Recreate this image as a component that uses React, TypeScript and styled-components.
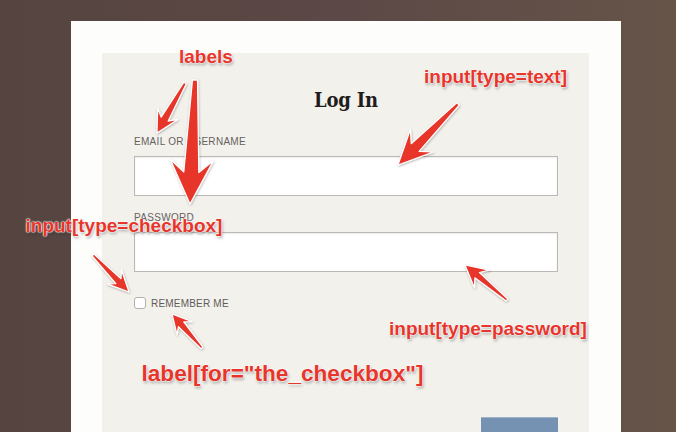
import React from "react";
import styled, { createGlobalStyle } from "styled-components";

const Global = createGlobalStyle`
  html, body { margin: 0; padding: 0; overflow: hidden; }
  body { font-family: "Liberation Sans", Arial, sans-serif; }
  * { box-sizing: border-box; }
`;

const Screen = styled.div`
  position: relative;
  width: 676px;
  height: 432px;
  overflow: hidden;
  background: linear-gradient(to right, #55443f 0%, #5c4846 50%, #665449 100%);
  padding: 21px 0 0 71px;
`;

const Card = styled.div`
  width: 550px;
  min-height: 411px;
  background: #fdfdfb;
  padding: 32px 32px 0 31px;
`;

const Panel = styled.div`
  background: #f3f1ec;
  padding: 34px 31px 40px 32px;
  display: flex;
  flex-direction: column;
`;

const Title = styled.h1`
  margin: 0 0 23px;
  font-family: "DejaVu Serif Condensed", "Liberation Serif", serif;
  font-weight: 700;
  font-size: 20px;
  line-height: 26px;
  letter-spacing: -0.2px;
  text-align: center;
  color: #1f1d1c;
`;

const Field = styled.div<{ $gapTop?: number }>`
  display: flex;
  flex-direction: column;
  gap: 8px;
  margin-top: ${(p) => p.$gapTop ?? 0}px;
`;

const Label = styled.label`
  font-size: 10px;
  line-height: 12px;
  letter-spacing: 0.3px;
  text-transform: uppercase;
  color: #65625e;
`;

const Input = styled.input`
  width: 424px;
  height: 40px;
  margin: 0;
  border: 1px solid #bcb9b4;
  background: #fff;
  box-shadow: inset 0 1px 2px rgba(0, 0, 0, 0.08);
  outline: none;
  padding: 0 10px;
  font-family: "Liberation Sans", Arial, sans-serif;
`;

const CheckRow = styled.div`
  display: flex;
  align-items: center;
  gap: 5px;
  margin-top: 25px;
  height: 12px;
`;

const Box = styled.span`
  display: inline-block;
  width: 12px;
  height: 12px;
  border: 1px solid #b3b0ab;
  border-radius: 3px;
  background: #fff;
`;

const CheckLabel = styled.label`
  font-size: 10px;
  line-height: 12px;
  letter-spacing: 0.2px;
  padding-top: 1px;
  color: #5f5c58;
  text-transform: uppercase;
`;

const ButtonRow = styled.div`
  display: flex;
  justify-content: flex-end;
  margin-top: 108px;
`;

const Button = styled.button`
  width: 77px;
  height: 60px;
  border: none;
  border-top: 1px solid #9db2c9;
  background: #7592b2;
  color: #fff;
  font-family: "Liberation Sans", Arial, sans-serif;
  font-size: 11px;
  letter-spacing: 0.5px;
  padding: 34px 0 0;
`;

const Note = styled.div<{ $size?: number }>`
  position: absolute;
  font-family: "Liberation Sans", Arial, sans-serif;
  font-weight: 700;
  font-size: ${(p) => p.$size ?? 19}px;
  line-height: 1;
  white-space: nowrap;
  color: #e8352b;
  text-shadow: 0 0 1px #fff, 0 0 2px #fff, 0 0 2px #fff, 1px 2px 3px rgba(0, 0, 0, 0.35);
`;

const Overlay = styled.svg`
  position: absolute;
  left: 0;
  top: 0;
  pointer-events: none;
`;

type Arrow = {
  t: [number, number];
  p: [number, number];
  L: number;
  W: number;
  w0: number;
  w1: number;
};

function arrowPoints({ t, p, L, W, w0, w1 }: Arrow): string {
  const [tx, ty] = t;
  const [px, py] = p;
  const dx = px - tx;
  const dy = py - ty;
  const len = Math.hypot(dx, dy);
  const ux = dx / len;
  const uy = dy / len;
  const nx = -uy;
  const ny = ux;
  const bx = px - ux * L;
  const by = py - uy * L;
  const kx = px - ux * L * 0.72;
  const ky = py - uy * L * 0.72;
  const pts: [number, number][] = [
    [tx + (nx * w0) / 2, ty + (ny * w0) / 2],
    [kx + (nx * w1) / 2, ky + (ny * w1) / 2],
    [bx + nx * W, by + ny * W],
    [px, py],
    [bx - nx * W, by - ny * W],
    [kx - (nx * w1) / 2, ky - (ny * w1) / 2],
    [tx - (nx * w0) / 2, ty - (ny * w0) / 2],
  ];
  return pts.map(([x, y]) => `${x.toFixed(1)},${y.toFixed(1)}`).join(" ");
}

const arrows: Arrow[] = [
  { t: [185, 83], p: [157, 133], L: 22, W: 11.5, w0: 3, w1: 8 },
  { t: [195, 80], p: [190, 204], L: 44, W: 21.5, w0: 5, w1: 15 },
  { t: [458, 104], p: [398, 165], L: 34, W: 16, w0: 3.5, w1: 11 },
  { t: [93, 255], p: [129, 292], L: 21, W: 10, w0: 2.5, w1: 7 },
  { t: [507, 300], p: [465, 265], L: 22, W: 11.5, w0: 2.5, w1: 7 },
  { t: [202, 348], p: [172, 314], L: 19, W: 10, w0: 2.5, w1: 7 },
];

const notes = [
  { text: "labels", left: 179, top: 47, size: 19 },
  { text: "input[type=text]", left: 424, top: 66.5, size: 19 },
  { text: "input[type=checkbox]", left: 25.5, top: 215.5, size: 19 },
  { text: "input[type=password]", left: 389, top: 319, size: 19 },
  { text: 'label[for="the_checkbox"]', left: 141.5, top: 362.5, size: 22.6 },
];

export default function App() {
  return (
    <>
      <Global />
      <Screen>
        <Card>
          <Panel>
            <Title>Log In</Title>
            <Field>
              <Label htmlFor="user">Email or Username</Label>
              <Input id="user" type="text" />
            </Field>
            <Field $gapTop={16}>
              <Label htmlFor="pass">Password</Label>
              <Input id="pass" type="password" />
            </Field>
            <CheckRow>
              <Box />
              <CheckLabel htmlFor="the_checkbox">Remember Me</CheckLabel>
            </CheckRow>
            <ButtonRow>
              <Button>LOG IN</Button>
            </ButtonRow>
          </Panel>
        </Card>
        <Overlay width={676} height={432} viewBox="0 0 676 432">
          <defs>
            <filter id="sh" x="-20%" y="-20%" width="140%" height="140%">
              <feDropShadow dx="0.5" dy="1" stdDeviation="0.8" floodColor="#000" floodOpacity="0.3" />
            </filter>
          </defs>
          {arrows.map((a, i) => (
            <polygon
              key={i}
              points={arrowPoints(a)}
              fill="#e8352b"
              stroke="#ffffff"
              strokeWidth={1.2}
              strokeLinejoin="round"
              filter="url(#sh)"
            />
          ))}
        </Overlay>
        {notes.map((n) => (
          <Note key={n.text} $size={n.size} style={{ left: n.left, top: n.top }}>
            {n.text}
          </Note>
        ))}
      </Screen>
    </>
  );
}
